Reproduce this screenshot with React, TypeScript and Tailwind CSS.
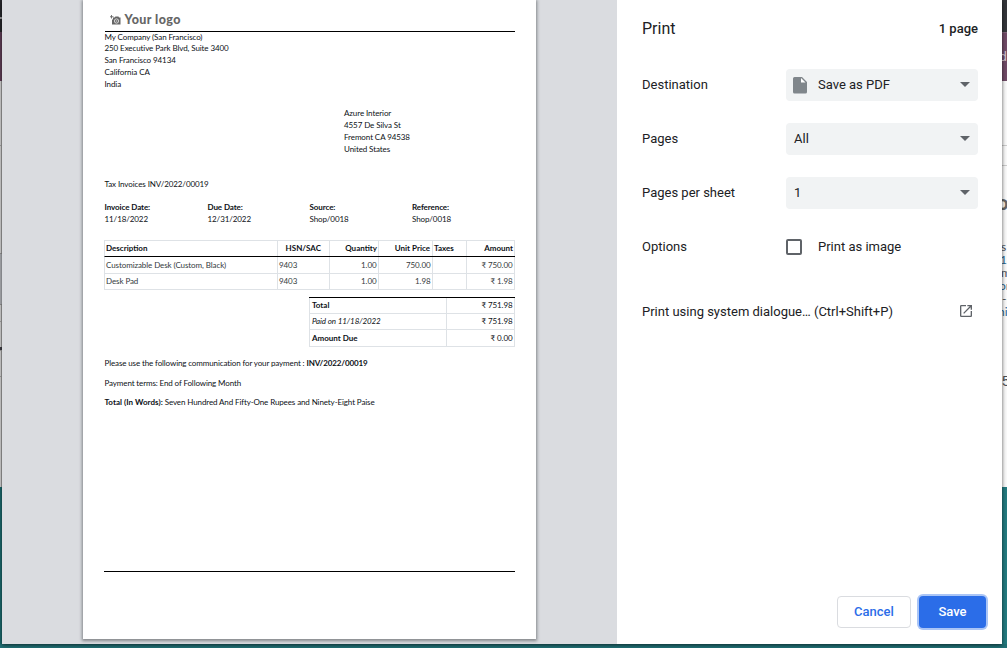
import React from "react";

function Caret() {
  return (
    <svg className="mb-px mr-2 h-[5px] w-[10px]" viewBox="0 0 10 5">
      <path d="M0 0h10L5 5z" fill="#5f6368" />
    </svg>
  );
}

function Select({ children }: { children: React.ReactNode }) {
  return (
    <div className="flex h-8 w-48 items-center justify-between rounded bg-[#f1f3f4] pl-2">
      <div className="flex items-center">{children}</div>
      <Caret />
    </div>
  );
}

function Setting({ label, children }: { label: string; children: React.ReactNode }) {
  return (
    <div className="flex h-[54px] items-center">
      <div className="w-36">{label}</div>
      {children}
    </div>
  );
}

function Lines({ items, className = "" }: { items: string[]; className?: string }) {
  return (
    <div className={className}>
      {items.map((t) => (
        <div key={t} className="h-3 leading-3">{t}</div>
      ))}
    </div>
  );
}

const facts = [
  ["Invoice Date:", "11/18/2022"],
  ["Due Date:", "12/31/2022"],
  ["Source:", "Shop/0018"],
  ["Reference:", "Shop/0018"],
];

const items = [
  ["Customizable Desk (Custom, Black)", "9403", "1.00", "750.00", "", "₹ 750.00"],
  ["Desk Pad", "9403", "1.00", "1.98", "", "₹ 1.98"],
];

const cell = "flex items-center border-r border-[#dee2e6] pl-px pb-px";
const headCell = "flex items-center border-r border-[#dee2e6] pl-px pb-px";
const grid = "grid grid-cols-[173px_52px_49px_54px_34px_48px] border-l border-[#dee2e6]";

function Invoice() {
  return (
    <div className="flex h-[639px] w-[453px] flex-col whitespace-nowrap bg-white pl-[21px] pr-[21px] font-['Lato',sans-serif] text-[8px] tracking-[-0.09px] text-[#0d1116] shadow-[0_1px_3px_1px_rgba(60,64,67,0.55)]">
      <div className="ml-[0.5px] flex h-[32px] items-center border-b border-black pl-[5px] pt-[8px]">
        <svg className="h-[10px] w-[11px]" viewBox="0 0 22 20" fill="none">
          <path d="M6 5h3l2-2h6l1 2h3v14H4V9h2z" fill="#666" />
          <circle cx="13" cy="12" r="4.3" stroke="white" strokeWidth="1.4" />
          <circle cx="13" cy="12" r="2" fill="#aaa" />
          <path d="M3 0v7M0 3.5h7" stroke="#666" strokeWidth="1.8" />
        </svg>
        <span className="ml-[4px] text-[12.5px] font-black leading-3 tracking-[0.42px] text-[#666]">Your logo</span>
      </div>
      <div className="ml-[0.5px] h-[10px] leading-[11px]">My Company (San Francisco)</div>
      <Lines className="ml-[0.5px]" items={["250 Executive Park Blvd, Suite 3400", "San Francisco 94134", "California CA", "India"]} />
      <Lines className="ml-[240px] mt-[17px]" items={["Azure Interior", "4557 De Silva St", "Fremont CA 94538", "United States"]} />
      <div className="ml-[0.5px] mt-[23px] leading-3">Tax Invoices INV/2022/00019</div>
      <div className="ml-[0.5px] mt-[11px] grid grid-cols-[103px_102px_102.5px_auto]">
        {facts.map(([k, v]) => (
          <div key={k} className="leading-3">
            <div className="font-bold">{k}</div>
            <div>{v}</div>
          </div>
        ))}
      </div>
      <div className={`${grid} mt-[15px] h-[17px] border-b border-b-black border-t font-bold tracking-normal`}>
        <div className={headCell}>Description</div>
        <div className={`${headCell} justify-end pr-[8px]`}>HSN/SAC</div>
        <div className={`${headCell} justify-end pr-px`}>Quantity</div>
        <div className={`${headCell} justify-end pr-[2px]`}>Unit Price</div>
        <div className={headCell}>Taxes</div>
        <div className={`${headCell} justify-end pr-px`}>Amount</div>
      </div>
      {items.map((row, r) => (
        <div key={row[0]} className={`${grid} ${r ? "h-4" : "h-[17px]"} border-b text-[#343a40]`}>
          {row.map((v, i) => (
            <div key={i} className={i > 1 ? `${cell} justify-end pr-[1.5px]` : cell}>{v}</div>
          ))}
        </div>
      ))}
      <div className="ml-[205px] mt-[7px] w-[206px] border-t border-black">
        {[["Total", "₹ 751.98"], ["Paid on 11/18/2022", "₹ 751.98"], ["Amount Due", "₹ 0.00"]].map(([k, v], i) => (
          <div key={k} className="grid h-4 grid-cols-[137px_68px] border-b border-l border-[#dee2e6] last:h-[17px]">
            <div className={i === 1 ? `${cell} italic` : `${cell} font-bold tracking-normal`}><span className="ml-px">{k}</span></div>
            <div className={`${cell} justify-end pr-[1.5px]`}>{v}</div>
          </div>
        ))}
      </div>
      <div className="ml-[0.5px] mt-[10px] leading-3 tracking-[-0.12px]">Please use the following communication for your payment : <b>INV/2022/00019</b></div>
      <div className="ml-[0.5px] mt-[8px] leading-3 tracking-[-0.12px]">Payment terms: End of Following Month</div>
      <div className="ml-[0.5px] mt-[7px] leading-3 tracking-[-0.11px]"><b className="tracking-[0.03px]">Total (In Words):</b> Seven Hundred And Fifty-One Rupees and Ninety-Eight Paise</div>
      <div className="mt-[163px] border-t border-black" />
    </div>
  );
}

function LeftEdge() {
  return (
    <div className="flex h-[644px] w-[2px] shrink-0 flex-col overflow-hidden bg-[#1b6b6f]">
      <div className="h-[32px] bg-[#27282d]"><div className="h-[17px]" /><div className="h-[2px] bg-[#a0a0a4]" /></div>
      <div className="h-[49px] bg-[#613f58]" />
      <div className="h-[64px] border-r border-[#aaa] bg-[#dcdcdc]" />
      <div className="h-[108px] border-r border-t border-[#aaa] bg-[#dcdcdc]" />
      <div className="h-[52px] border-y border-[#999] bg-[#b5b7bc]" />
      <div className="h-[16px] border-r border-[#aaa] bg-[#dcdcdc]" />
      <div className="h-[26px] border-r border-t border-[#aaa] bg-[#dcdcdc]" />
      <div className="h-[3px] bg-[#404048]" />
      <div className="h-[26px] border-r border-t border-[#aaa] bg-[#dcdcdc]" />
      <div className="h-[111px] border-r border-t border-[#aaa] bg-[#dcdcdc]" />
    </div>
  );
}

function RightEdge() {
  return (
    <div className="flex h-[644px] w-[5px] shrink-0 flex-col overflow-hidden whitespace-nowrap bg-[#237b80] font-['Lato',sans-serif] text-[12px] text-[#495057]">
      <div className="h-[32px] shrink-0 bg-[#34363a]" />
      <div className="flex h-[49px] shrink-0 items-center justify-end border-t border-[#81647a] bg-[#714b67] font-['Noto_Sans',sans-serif] text-[13px] text-[#d8ccd5]">d</div>
      <div className="h-[64px] shrink-0 bg-[#fafafa]" />
      <div className="h-[21px] shrink-0 border-y border-[#ccc] bg-[#fafafa]" />
      <div className="h-[321px] shrink-0 bg-[#fafafa]">
        <div className="-ml-[5px] pt-[26px] text-[20px] font-black leading-[20px] text-[#666]">o</div>
        <div className="mt-[28px] leading-[13px]">
          <div className="-ml-px">s</div>
          <div className="-ml-[2px] text-[#28658f]">1</div>
          <div className="-ml-px">m</div>
          <div className="-ml-[3px] text-[#28658f]">or</div>
          <div>--</div>
          <div className="-ml-[4px] text-[#28658f]">ni</div>
        </div>
        <div className="mt-[54px] font-['Liberation_Sans',sans-serif] text-[15px] leading-[18px]">5</div>
      </div>
    </div>
  );
}

export default function App() {
  return (
    <div className="h-[648px] w-[1007px] overflow-hidden bg-[#217176] font-['Roboto',sans-serif] text-[13px] text-[#202124]">
      <div className="flex h-[644px]">
        <LeftEdge />
        <div className="relative z-10 flex w-[1000px] shrink-0 shadow-[0_1px_4px_rgba(0,0,0,0.65)]">
          <div className="w-[615px] overflow-hidden bg-[#dadce0] pl-[81px]">
            <Invoice />
          </div>
          <div className="flex w-[385px] flex-col bg-white pl-px">
            <div className="flex h-[58px] items-center justify-between pl-6 pr-6">
              <h1 className="text-base">Print</h1>
              <span className="font-medium">1 page</span>
            </div>
            <div className="pl-6">
              <Setting label="Destination">
                <Select>
                  <svg className="ml-[-1px] mr-[11px] h-[18px] w-[14px]" viewBox="0 0 14 18">
                    <path d="M1.500 1H9l5 5v10a1.500 1.500 0 0 1-1.500 1.500h-11A1.500 1.500 0 0 1 0 16V2.500A1.500 1.500 0 0 1 1.500 1z" fill="#80868b" />
                    <path d="M8 2v4.500h4.500z" fill="white" />
                  </svg>
                  Save as PDF
                </Select>
              </Setting>
              <Setting label="Pages"><Select>All</Select></Setting>
              <Setting label="Pages per sheet"><Select>1</Select></Setting>
              <Setting label="Options">
                <span className="mr-4 h-4 w-4 rounded-[2px] border-2 border-[#5f6368]" />
                Print as image
              </Setting>
            </div>
            <div className="mt-[16px] flex h-[42px] items-center justify-between pl-6 pr-[28px]">
              <span className="pt-px">Print using system dialogue… (Ctrl+Shift+P)</span>
              <svg className="h-4 w-4" viewBox="0 0 24 24" fill="#5f6368">
                <path d="M19 19H5V5h7V3H5a2 2 0 0 0-2 2v14a2 2 0 0 0 2 2h14c1.100 0 2-.9 2-2v-7h-2v7zM14 3v2h3.590l-9.830 9.830 1.410 1.410L19 6.410V10h2V3h-7z" />
              </svg>
            </div>
            <div className="mb-4 mt-auto flex justify-end gap-2 pr-4 font-medium">
              <button className="h-8 w-[74px] rounded border border-[#dadce0] text-[#2b6de8]">Cancel</button>
              <button className="h-8 w-[67px] rounded bg-[#2b6de8] text-white shadow-[0_0_0_2px_rgba(43,109,232,0.4)]">Save</button>
            </div>
          </div>
        </div>
        <RightEdge />
      </div>
    </div>
  );
}
